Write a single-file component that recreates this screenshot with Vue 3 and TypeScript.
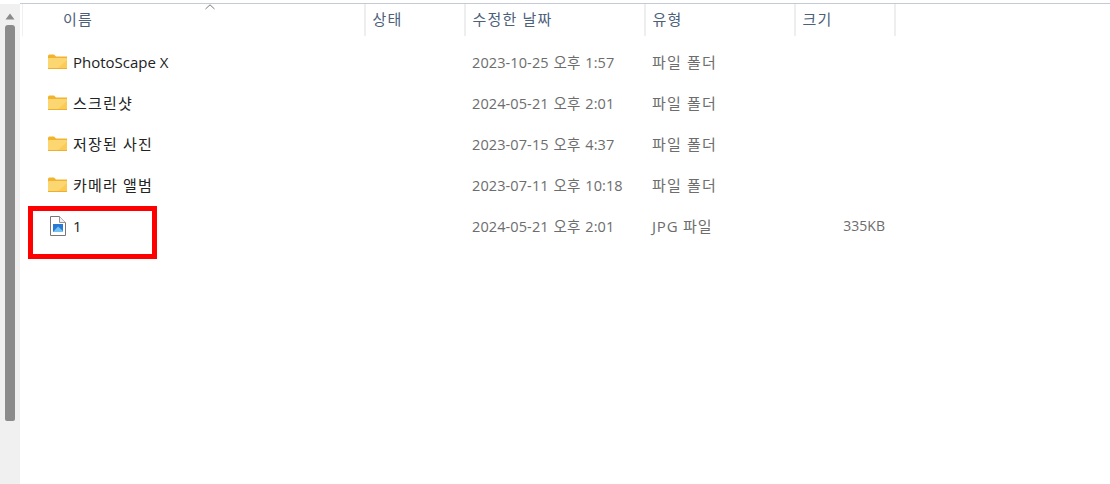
<template>
  <div class="explorer">
    <div class="scrollbar">
      <svg class="arrow" width="10" height="7" viewBox="0 0 10 7"><path d="M5 0.5 L9.5 6.5 H0.5 Z" fill="#8a8a8a" /></svg>
      <div class="thumb"></div>
    </div>
    <div class="pane">
      <div class="header">
        <div v-for="col in columns" :key="col.label" class="head-cell" :class="col.cls">{{ col.label }}</div>
        <svg class="sort" width="10" height="6" viewBox="0 0 10 6"><path d="M0.5 5 L5 0.8 L9.5 5" fill="none" stroke="#7a7a7a" stroke-width="1" /></svg>
      </div>
      <div class="rows">
        <div v-for="file in files" :key="file.name" class="row">
          <div class="name">
            <svg v-if="file.folder" class="icon" width="19" height="16" viewBox="0 0 19 16">
              <path d="M0 2 Q0 0.5 1.5 0.5 H6 L8 2.5 H19 V5 H0 Z" fill="#f2b32e" />
              <rect x="0" y="4" width="19" height="11" rx="1" fill="#fcd670" />
              <path d="M9 15 L19 6 V15 Z" fill="#fbcb55" />
              <rect x="0" y="14" width="19" height="1" fill="#edaf2f" />
            </svg>
            <svg v-else class="icon" width="19" height="22" viewBox="0 0 19 22">
              <path d="M2.5 1.5 H11.5 L17.5 7.5 V20.5 H2.5 Z" fill="#fff" stroke="#7d7378" stroke-width="1" />
              <path d="M11.5 1.5 V7.5 H17.5" fill="#f0f0f0" stroke="#9a9296" stroke-width="1" />
              <rect x="5" y="9" width="10" height="8" fill="#2a78d6" />
              <path d="M5 17 L10 11.5 L15 16 V17 Z" fill="#6fc2f2" />
            </svg>
            <span :class="{ kr: isKorean(file.name) }">{{ file.name }}</span>
          </div>
          <div></div>
          <div class="muted date">{{ file.date }}</div>
          <div class="muted" :class="isKorean(file.type[0]) ? 'kr' : 'mixed'">{{ file.type }}</div>
          <div class="muted size">{{ file.size }}</div>
        </div>
      </div>
      <div class="highlight"></div>
    </div>
  </div>
</template>

<script setup lang="ts">
interface FileRow {
  name: string
  date: string
  type: string
  size: string
  folder: boolean
}

const columns = [
  { label: '이름', cls: 'first' },
  { label: '상태', cls: '' },
  { label: '수정한 날짜', cls: '' },
  { label: '유형', cls: '' },
  { label: '크기', cls: '' },
]

const files: FileRow[] = [
  { name: 'PhotoScape X', date: '2023-10-25 오후 1:57', type: '파일 폴더', size: '', folder: true },
  { name: '스크린샷', date: '2024-05-21 오후 2:01', type: '파일 폴더', size: '', folder: true },
  { name: '저장된 사진', date: '2023-07-15 오후 4:37', type: '파일 폴더', size: '', folder: true },
  { name: '카메라 앨범', date: '2023-07-11 오후 10:18', type: '파일 폴더', size: '', folder: true },
  { name: '1', date: '2024-05-21 오후 2:01', type: 'JPG 파일', size: '335KB', folder: false },
]

function isKorean(text: string) {
  return /[\uac00-\ud7a3]/.test(text)
}
</script>

<style>
html,
body {
  margin: 0;
  background: #fff;
  overflow: hidden;
}
</style>

<style scoped>
.explorer {
  width: 1110px;
  height: 484px;
  display: flex;
  font-family: 'Open Sans', 'Noto Sans CJK KR', sans-serif;
  font-size: 15px;
  background: #fff;
}

.scrollbar {
  width: 20px;
  flex: none;
  margin-top: 4px;
  background: #f0f0f0;
  display: flex;
  flex-direction: column;
  align-items: center;
  padding-top: 9px;
  box-sizing: border-box;
}

.arrow {
  display: block;
}

.thumb {
  width: 10px;
  height: 396px;
  margin-top: 5px;
  background: #8b8b8b;
  border-radius: 3px 3px 2px 2px;
}

.pane {
  flex: 1;
  position: relative;
  border-top: 1px solid #c3cbd9;
  margin-top: 3px;
}

.header {
  height: 32px;
  margin-left: 2px;
  display: grid;
  grid-template-columns: 343px 100px 180px 150px 100px;
  position: relative;
  border-left: 1px solid #f0f0f0;
}

.head-cell {
  border-right: 2px solid #eeeeee;
  padding-left: 6.5px;
  color: #4c607a;
  font-size: 15px;
  letter-spacing: 1.2px;
  line-height: 30px;
  box-sizing: border-box;
}

.head-cell.first {
  padding-left: 40px;
}

.sort {
  position: absolute;
  left: 182px;
  top: 0;
}

.rows {
  padding-top: 5px;
  margin-left: 3px;
}

.row {
  height: 41px;
  display: grid;
  grid-template-columns: 341px 100px 180px 150px 100px;
  align-items: center;
}

.name {
  display: flex;
  align-items: center;
  padding-left: 25px;
  color: #222;
}

.icon {
  flex: none;
  margin-right: 6px;
}

.muted {
  color: #6d6d6d;
  padding-left: 8px;
  font-size: 15px;
}

.kr {
  letter-spacing: 1.2px;
}

.mixed {
  letter-spacing: 0.8px;
}

.date {
  font-size: 14.5px;
  letter-spacing: 0.1px;
  word-spacing: 1px;
}

.size {
  font-size: 14px;
  text-align: right;
  padding-right: 9px;
}

.highlight {
  position: absolute;
  left: 8px;
  top: 202px;
  width: 129px;
  height: 53px;
  border: 5px solid #ff0000;
  box-sizing: border-box;
}
</style>
